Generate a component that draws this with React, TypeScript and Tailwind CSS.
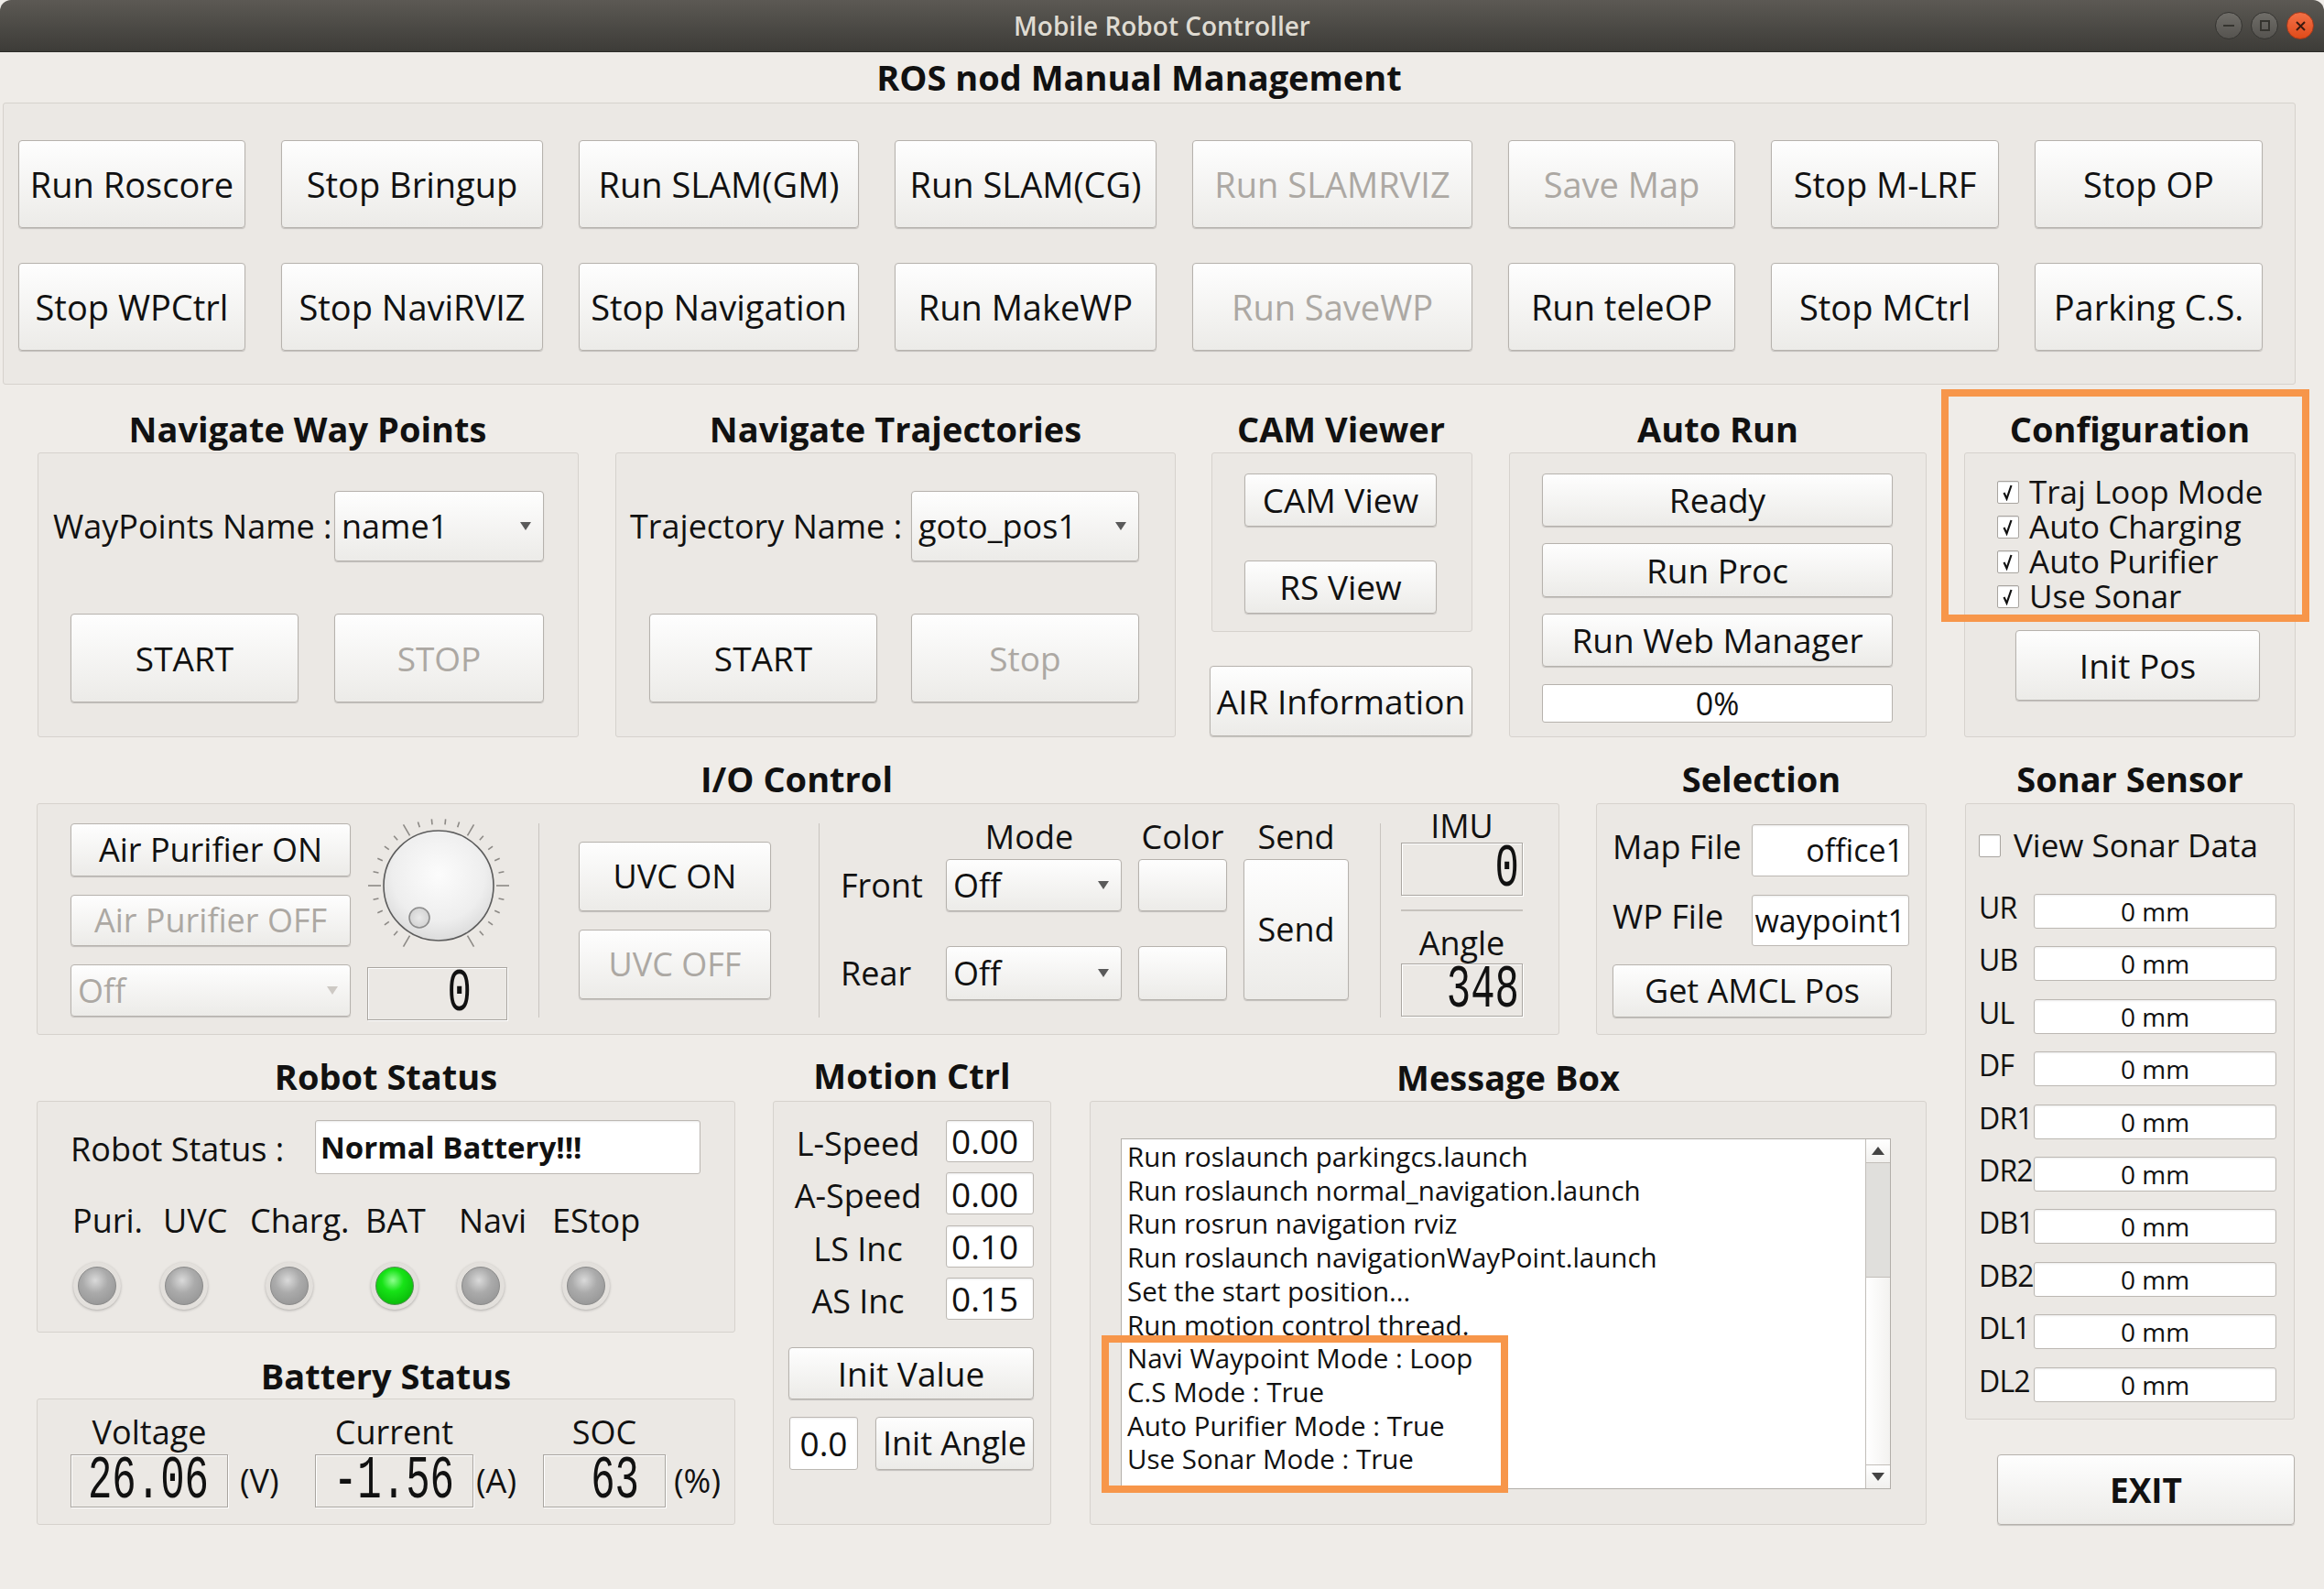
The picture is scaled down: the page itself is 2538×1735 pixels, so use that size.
import React from "react";

type P = { children?: React.ReactNode; className?: string; disabled?: boolean };

function Btn({ children, className = "", disabled = false }: P) {
  return (
    <div
      className={
        "flex items-center justify-center whitespace-nowrap rounded-[4px] border border-[#b6b2ad] bg-linear-to-b from-[#fefefe] to-[#ecebe8] shadow-[0_1px_1px_rgba(0,0,0,0.18)] " +
        (disabled ? "text-[#aca8a3] " : "text-[#111] ") +
        className
      }
    >
      {children}
    </div>
  );
}

function Combo({ text, className = "", disabled = false }: { text: string; className?: string; disabled?: boolean }) {
  return (
    <div
      className={
        "flex items-center justify-between whitespace-nowrap rounded-[4px] border border-[#b6b2ad] bg-linear-to-b from-[#fefefe] to-[#ecebe8] shadow-[0_1px_1px_rgba(0,0,0,0.18)] pl-[7px] pr-[13px] " +
        (disabled ? "text-[#aca8a3] " : "text-[#111] ") +
        className
      }
    >
      <span>{text}</span>
      <svg width="12" height="9" viewBox="0 0 12 9">
        <path d="M0 0H12L6 9Z" fill={disabled ? "#cdc9c4" : "#5a5a5a"} />
      </svg>
    </div>
  );
}

function Field({ children, className = "" }: P) {
  return (
    <div
      className={
        "flex items-center whitespace-nowrap bg-white border border-[#bcb8b3] rounded-[3px] shadow-[inset_0_1px_2px_rgba(0,0,0,0.08)] text-[#111] " +
        className
      }
    >
      {children}
    </div>
  );
}

function LCD({ value, className = "" }: { value: string; className?: string }) {
  return (
    <div
      className={
        "flex items-center justify-end border border-[#a9a5a0] shadow-[inset_1px_1px_0_#ffffff,1px_1px_0_#ffffff] font-['Liberation_Mono',monospace] text-[44px] leading-[30px] text-[#111] " +
        className
      }
    >
      <span className="inline-block h-[30px] leading-[30px] scale-y-[1.5] whitespace-pre">{value}</span>
    </div>
  );
}

function Group({ children, className = "" }: P) {
  return <div className={"border border-[#d6d2cd] rounded-[3px] bg-[#ebe8e4] " + className}>{children}</div>;
}

function Heading({ children, className = "" }: P) {
  return (
    <div className={"flex items-center justify-center whitespace-nowrap font-bold text-[38px] text-[#111] " + className}>
      {children}
    </div>
  );
}

function Check({ checked }: { checked: boolean }) {
  return (
    <div className="w-[24px] h-[25px] shrink-0 bg-white border border-[#a9a5a0] rounded-[2px] flex items-center justify-center shadow-[inset_0_1px_1px_rgba(0,0,0,0.1)]">
      {checked && (
        <svg width="14" height="19" viewBox="0 0 14 19">
          <path d="M2.5 10 L5.5 16.5 L10.5 2" fill="none" stroke="#111" strokeWidth="2.2" />
        </svg>
      )}
    </div>
  );
}

function Led({ on }: { on: boolean }) {
  return (
    <div className="w-[52px] h-[52px] shrink-0 rounded-full bg-[#e3e0dc] shadow-[0_1px_3px_rgba(0,0,0,0.25)] flex items-center justify-center">
      <div
        className={
          "w-[42px] h-[42px] rounded-full border " +
          (on
            ? "border-[#4f8f4f] bg-[radial-gradient(circle_at_45%_35%,#8dff8d_0%,#17e317_35%,#0bbf0b_75%,#3c8a3c_100%)]"
            : "border-[#8a8a8a] bg-[radial-gradient(circle_at_45%_35%,#dadada_0%,#ababab_40%,#9a9a9a_75%,#828282_100%)]")
        }
      />
    </div>
  );
}

function Dial() {
  const ticks: React.ReactNode[] = [];
  const cx = 78;
  const cy = 78;
  for (let i = 0; i <= 25; i++) {
    const deg = 240 - i * 12;
    const rad = (deg * Math.PI) / 180;
    const long = i % 5 === 0;
    const r1 = long ? 63 : 67;
    const r2 = long ? 77 : 73;
    ticks.push(
      <line
        key={i}
        x1={cx + r1 * Math.cos(rad)}
        y1={cy - r1 * Math.sin(rad)}
        x2={cx + r2 * Math.cos(rad)}
        y2={cy - r2 * Math.sin(rad)}
        stroke="#8c8985"
        strokeWidth={1.6}
      />
    );
  }
  return (
    <svg width="156" height="156" viewBox="0 0 156 156">
      <defs>
        <radialGradient id="dialg" cx="0.5" cy="0.4" r="0.65">
          <stop offset="0" stopColor="#fcfcfc" />
          <stop offset="0.65" stopColor="#eeeeee" />
          <stop offset="1" stopColor="#d6d6d6" />
        </radialGradient>
        <radialGradient id="dotg" cx="0.5" cy="0.5" r="0.6">
          <stop offset="0" stopColor="#e9e9e9" />
          <stop offset="1" stopColor="#cfcfcf" />
        </radialGradient>
      </defs>
      {ticks}
      <circle cx="78" cy="78" r="60" fill="url(#dialg)" stroke="#5c5c5c" strokeWidth="1.6" />
      <circle cx="57" cy="113" r="11" fill="url(#dotg)" stroke="#8c8c8c" strokeWidth="1.6" />
    </svg>
  );
}

function TitleBar() {
  return (
    <div className="h-[57px] rounded-t-[12px] bg-linear-to-b from-[#5c5954] to-[#3d3c38] grid grid-cols-[1fr_auto_1fr] items-center border-b border-[#2c2b28]">
      <div />
      <div className="text-[28px] font-semibold text-[#dfdbd2]">Mobile Robot Controller</div>
      <div className="flex justify-end gap-[9px] pr-[11px]">
        <div className="w-[30px] h-[30px] rounded-full border border-[#353431] bg-linear-to-b from-[#706e69] to-[#55534f] flex items-center justify-center">
          <div className="w-[12px] h-[2px] bg-[#35342f]" />
        </div>
        <div className="w-[30px] h-[30px] rounded-full border border-[#353431] bg-linear-to-b from-[#706e69] to-[#55534f] flex items-center justify-center">
          <div className="w-[11px] h-[12px] border-2 border-[#35342f]" />
        </div>
        <div className="w-[30px] h-[30px] rounded-full border border-[#a8391a] bg-linear-to-b from-[#f27045] to-[#df4a17] flex items-center justify-center">
          <svg width="11" height="11" viewBox="0 0 11 11">
            <path d="M1 1L10 10M10 1L1 10" stroke="#3a1a10" strokeWidth="2" />
          </svg>
        </div>
      </div>
    </div>
  );
}

const row1: [string, boolean][] = [
  ["Run Roscore", false],
  ["Stop Bringup", false],
  ["Run SLAM(GM)", false],
  ["Run SLAM(CG)", false],
  ["Run SLAMRVIZ", true],
  ["Save Map", true],
  ["Stop M-LRF", false],
  ["Stop OP", false],
];
const row2: [string, boolean][] = [
  ["Stop WPCtrl", false],
  ["Stop NaviRVIZ", false],
  ["Stop Navigation", false],
  ["Run MakeWP", false],
  ["Run SaveWP", true],
  ["Run teleOP", false],
  ["Stop MCtrl", false],
  ["Parking C.S.", false],
];

const messages = [
  "Run roslaunch parkingcs.launch",
  "Run roslaunch normal_navigation.launch",
  "Run rosrun navigation rviz",
  "Run roslaunch navigationWayPoint.launch",
  "Set the start position...",
  "Run motion control thread.",
  "Navi Waypoint Mode : Loop",
  "C.S Mode : True",
  "Auto Purifier Mode : True",
  "Use Sonar Mode : True",
];

const sonar = ["UR", "UB", "UL", "DF", "DR1", "DR2", "DB1", "DB2", "DL1", "DL2"];

export default function App() {
  return (
    <div className="relative w-[2538px] h-[1735px] overflow-hidden bg-[#efece8] font-['Open_Sans','Noto_Sans',sans-serif] text-[36px] text-[#111]">
      <TitleBar />
      <div className="pl-[3px]">
        {/* Header */}
        <div className="w-[2504px] h-[55px] flex items-center justify-center pr-[22px] font-bold text-[38px]">
          ROS nod Manual Management
        </div>
        {/* Top group */}
        <Group className="w-[2504px] h-[308px] pt-[40px] pl-[16px]">
          <div className="grid grid-cols-[248px_286px_306px_286px_306px_248px_249px_249px] grid-rows-[96px_96px] gap-x-[39px] gap-y-[38px] text-[38px]">
            {row1.map(([t, d]) => (
              <Btn key={t} disabled={d}>
                {t}
              </Btn>
            ))}
            {row2.map(([t, d]) => (
              <Btn key={t} disabled={d}>
                {t}
              </Btn>
            ))}
          </div>
        </Group>

        <div className="flex pl-[37px]">
          {/* LEFT AREA */}
          <div className="w-[2064px] flex flex-col">
            {/* Row A */}
            <div className="flex h-[385px]">
              <div className="w-[592px] flex flex-col">
                <Heading className="h-[74px] pt-[22px]">Navigate Way Points</Heading>
                <Group className="h-[311px] ml-[1px]">
                  <div className="flex items-center pl-[16px] pt-[41px]">
                    <span className="w-[307px] whitespace-nowrap">WayPoints Name :</span>
                    <Combo text="name1" className="w-[229px] h-[77px]" />
                  </div>
                  <div className="flex pl-[35px] pt-[57px] gap-[39px] text-[37px]">
                    <Btn className="w-[249px] h-[97px]">START</Btn>
                    <Btn disabled className="w-[229px] h-[97px]">
                      STOP
                    </Btn>
                  </div>
                </Group>
              </div>
              <div className="w-[612px] ml-[40px] flex flex-col">
                <Heading className="h-[74px] pt-[22px]">Navigate Trajectories</Heading>
                <Group className="h-[311px]">
                  <div className="flex items-center pl-[15px] pt-[41px]">
                    <span className="w-[307px] whitespace-nowrap">Trajectory Name :</span>
                    <Combo text="goto_pos1" className="w-[249px] h-[77px]" />
                  </div>
                  <div className="flex pl-[36px] pt-[57px] gap-[37px] text-[37px]">
                    <Btn className="w-[249px] h-[97px]">START</Btn>
                    <Btn disabled className="w-[249px] h-[97px]">
                      Stop
                    </Btn>
                  </div>
                </Group>
              </div>
              <div className="w-[287px] ml-[37px] flex flex-col">
                <Heading className="h-[74px] pt-[22px]">CAM Viewer</Heading>
                <Group className="ml-[2px] h-[196px] pt-[22px] pl-[35px] text-[37px]">
                  <Btn className="w-[210px] h-[58px]">CAM View</Btn>
                  <Btn className="w-[210px] h-[58px] mt-[37px]">RS View</Btn>
                </Group>
                <Btn className="mt-[37px] w-[287px] h-[77px] text-[37px]">AIR Information</Btn>
              </div>
              <div className="w-[456px] ml-[40px] flex flex-col">
                <Heading className="h-[74px] pt-[22px]">Auto Run</Heading>
                <Group className="h-[311px] pt-[22px] pl-[35px] flex flex-col text-[37px]">
                  <Btn className="w-[383px] h-[58px]">Ready</Btn>
                  <Btn className="w-[383px] h-[59px] mt-[18px]">Run Proc</Btn>
                  <Btn className="w-[383px] h-[58px] mt-[18px]">Run Web Manager</Btn>
                  <div className="w-[383px] h-[42px] mt-[19px] bg-white border border-[#b6b2ad] rounded-[3px] flex items-center justify-center text-[34px] leading-none">
                    0%
                  </div>
                </Group>
              </div>
            </div>

            {/* Row B */}
            <div className="flex h-[325px]">
              <div className="w-[1663px] flex flex-col">
                <Heading className="h-[72px] pt-[18px] w-[1663px] justify-start">
                  <span className="ml-[725px]">I/O Control</span>
                </Heading>
                <Group className="h-[253px] flex items-start">
                  {/* col 1 */}
                  <div className="ml-[36px] mt-[21px] flex flex-col w-[306px]">
                    <Btn className="w-[306px] h-[58px]">Air Purifier ON</Btn>
                    <Btn disabled className="w-[306px] h-[56px] mt-[20px]">
                      Air Purifier OFF
                    </Btn>
                    <Combo disabled text="Off" className="w-[306px] h-[57px] mt-[20px]" />
                  </div>
                  {/* dial */}
                  <div className="ml-[18px] flex flex-col w-[156px]">
                    <div className="mt-[11px]">
                      <Dial />
                    </div>
                    <LCD value="0" className="mt-[11px] w-[153px] h-[58px] pr-[38px]" />
                  </div>
                  <div className="ml-[31px] mt-[21px] w-[1px] h-[212px] bg-[#c8c4bf]" />
                  {/* UVC */}
                  <div className="ml-[43px] mt-[41px] flex flex-col w-[210px]">
                    <Btn className="w-[210px] h-[76px]">UVC ON</Btn>
                    <Btn disabled className="w-[210px] h-[76px] mt-[20px]">
                      UVC OFF
                    </Btn>
                  </div>
                  <div className="ml-[52px] mt-[21px] w-[1px] h-[212px] bg-[#c8c4bf]" />
                  {/* Mode area */}
                  <div className="ml-[23px] mt-[12px] flex">
                    <div className="w-[115px] flex flex-col">
                      <div className="h-[48px]" />
                      <div className="h-[57px] flex items-center">Front</div>
                      <div className="h-[59px] mt-[38px] flex items-center">Rear</div>
                    </div>
                    <div className="w-[192px] flex flex-col">
                      <div className="h-[48px] flex items-center justify-center pr-[10px]">Mode</div>
                      <Combo text="Off" className="w-[192px] h-[57px]" />
                      <Combo text="Off" className="w-[192px] h-[59px] mt-[38px]" />
                    </div>
                    <div className="w-[97px] ml-[18px] flex flex-col">
                      <div className="h-[48px] flex items-center justify-center">Color</div>
                      <Btn className="w-[97px] h-[57px]" />
                      <Btn className="w-[97px] h-[59px] mt-[38px]" />
                    </div>
                    <div className="w-[115px] ml-[18px] flex flex-col">
                      <div className="h-[48px] flex items-center justify-center">Send</div>
                      <Btn className="w-[115px] h-[154px]">Send</Btn>
                    </div>
                  </div>
                  <div className="ml-[34px] mt-[21px] w-[1px] h-[212px] bg-[#c8c4bf]" />
                  {/* IMU */}
                  <div className="ml-[22px] mt-[6px] w-[133px] flex flex-col">
                    <div className="h-[36px] flex items-center justify-center leading-none">IMU</div>
                    <LCD value="0" className="w-[133px] h-[58px] pr-[3px]" />
                    <div className="mt-[15px] h-[2px] bg-[#c6c2bd]" />
                    <div className="mt-[17px] h-[36px] flex items-center justify-center leading-none">Angle</div>
                    <LCD value="348" className="mt-[4px] w-[133px] h-[58px] pr-[3px]" />
                  </div>
                </Group>
              </div>
              <div className="w-[361px] ml-[40px] flex flex-col">
                <Heading className="h-[72px] pt-[18px]">Selection</Heading>
                <Group className="h-[253px] pl-[17px] pt-[22px] flex flex-col">
                  <div className="flex items-center">
                    <span className="w-[152px] -mt-[8px]">Map File</span>
                    <Field className="w-[172px] h-[57px] justify-end pr-[5px] text-[34px]">office1</Field>
                  </div>
                  <div className="flex items-center mt-[20px]">
                    <span className="w-[152px] -mt-[8px]">WP File</span>
                    <Field className="w-[172px] h-[56px] justify-end pr-[3px] text-[34px]">waypoint1</Field>
                  </div>
                  <Btn className="w-[305px] h-[58px] mt-[20px]">Get AMCL Pos</Btn>
                </Group>
              </div>
            </div>

            {/* Row C */}
            <div className="flex">
              <div className="w-[763px] flex flex-col">
                <Heading className="h-[72px] pt-[18px]">Robot Status</Heading>
                <Group className="h-[253px] flex flex-col">
                  <div className="flex items-center pl-[36px] mt-[20px]">
                    <span className="w-[267px] whitespace-nowrap mt-[4px]">Robot Status :</span>
                    <Field className="w-[421px] h-[59px] pl-[5px] font-bold text-[33px]">Normal Battery!!!</Field>
                  </div>
                  <div className="flex pl-[38px] mt-[33px] h-[36px] items-center">
                    <span className="w-[99px]">Puri.</span>
                    <span className="w-[95px]">UVC</span>
                    <span className="w-[126px]">Charg.</span>
                    <span className="w-[102px]">BAT</span>
                    <span className="w-[102px]">Navi</span>
                    <span>EStop</span>
                  </div>
                  <div className="flex pl-[39px] mt-[27px]">
                    <Led on={false} />
                    <div className="ml-[43px]">
                      <Led on={false} />
                    </div>
                    <div className="ml-[63px]">
                      <Led on={false} />
                    </div>
                    <div className="ml-[63px]">
                      <Led on={true} />
                    </div>
                    <div className="ml-[42px]">
                      <Led on={false} />
                    </div>
                    <div className="ml-[63px]">
                      <Led on={false} />
                    </div>
                  </div>
                </Group>
                <Heading className="h-[72px] pt-[22px]">Battery Status</Heading>
                <Group className="h-[138px] flex items-start pl-[36px] pt-[17px]">
                  <div className="w-[172px] flex flex-col items-center">
                    <div className="h-[37px] leading-[37px]">Voltage</div>
                    <LCD value="26.06" className="mt-[6px] w-[172px] h-[58px] pr-[20px]" />
                  </div>
                  <div className="ml-[13px] w-[52px] mt-[43px] h-[58px] flex items-center">(V)</div>
                  <div className="ml-[30px] w-[173px] flex flex-col items-center">
                    <div className="h-[37px] leading-[37px]">Current</div>
                    <LCD value="-1.56" className="mt-[6px] w-[173px] h-[58px] pr-[20px]" />
                  </div>
                  <div className="ml-[3px] w-[50px] mt-[43px] h-[58px] flex items-center">(A)</div>
                  <div className="ml-[23px] w-[134px] flex flex-col items-center">
                    <div className="h-[37px] leading-[37px]">SOC</div>
                    <LCD value="63" className="mt-[6px] w-[134px] h-[58px] pr-[28px]" />
                  </div>
                  <div className="ml-[9px] w-[58px] mt-[43px] h-[58px] flex items-center">(%)</div>
                </Group>
              </div>

              <div className="w-[304px] ml-[41px] flex flex-col">
                <Heading className="h-[72px] pt-[16px]">Motion Ctrl</Heading>
                <Group className="h-[463px] flex flex-col pt-[20px]">
                  {[
                    ["L-Speed", "0.00"],
                    ["A-Speed", "0.00"],
                    ["LS Inc", "0.10"],
                    ["AS Inc", "0.15"],
                  ].map(([l, v], i) => (
                    <div key={l} className={"flex items-center h-[46px] " + (i > 0 ? "mt-[11.3px]" : "")}>
                      <span className="w-[160px] ml-[12px] mt-[6px] text-center whitespace-nowrap">{l}</span>
                      <Field className="ml-[16px] w-[96px] h-[46px] pl-[5px] text-[37px]">{v}</Field>
                    </div>
                  ))}
                  <Btn className="ml-[16px] mt-[30px] w-[268px] h-[57px] text-[37px]">Init Value</Btn>
                  <div className="flex mt-[19px]">
                    <Field className="ml-[17px] w-[75px] h-[58px] justify-center text-[37px]">0.0</Field>
                    <Btn className="ml-[19px] w-[173px] h-[58px] text-[36px]">Init Angle</Btn>
                  </div>
                </Group>
              </div>

              <div className="w-[914px] ml-[42px] flex flex-col">
                <Heading className="h-[72px] pt-[20px]">Message Box</Heading>
                <Group className="h-[463px] pl-[33px] pt-[40px]">
                  <div className="w-[841px] h-[383px] bg-white border border-[#b3afaa] flex">
                    <div className="flex-1 pl-[6px] pt-[1px] text-[29.5px] leading-[36.7px] whitespace-nowrap">
                      {messages.map((m) => (
                        <div key={m}>{m}</div>
                      ))}
                    </div>
                    <div className="w-[27px] border-l border-[#c2beb9] flex flex-col">
                      <div className="h-[26px] bg-linear-to-b from-white to-[#f1f0ee] border-b border-[#c2beb9] flex items-center justify-center">
                        <svg width="14" height="9" viewBox="0 0 14 9">
                          <path d="M0 9H14L7 0Z" fill="#444" />
                        </svg>
                      </div>
                      <div className="h-[125px] bg-[#e0dfdc] border-b border-[#c2beb9]" />
                      <div className="flex-1 bg-linear-to-r from-white to-[#f3f2f0]" />
                      <div className="h-[26px] bg-linear-to-b from-white to-[#f1f0ee] border-t border-[#c2beb9] flex items-center justify-center">
                        <svg width="14" height="9" viewBox="0 0 14 9">
                          <path d="M0 0H14L7 9Z" fill="#444" />
                        </svg>
                      </div>
                    </div>
                  </div>
                </Group>
              </div>
            </div>
          </div>

          {/* RIGHT COLUMN */}
          <div className="w-[362px] ml-[41px] flex flex-col">
            <Heading className="h-[74px] pt-[22px]">Configuration</Heading>
            <Group className="h-[311px] pt-[23px] flex flex-col">
              {["Traj Loop Mode", "Auto Charging", "Auto Purifier", "Use Sonar"].map((t) => (
                <div key={t} className="h-[38px] flex items-center pl-[35px]">
                  <Check checked={true} />
                  <span className="ml-[11px] whitespace-nowrap text-[35px] leading-[38px]">{t}</span>
                </div>
              ))}
              <Btn className="ml-[55px] mt-[18px] w-[267px] h-[77px] text-[37px]">Init Pos</Btn>
            </Group>
            <Heading className="h-[72px] pt-[18px]">Sonar Sensor</Heading>
            <Group className="ml-[1px] w-[360px] h-[673px] pt-[26px] flex flex-col">
              <div className="h-[38px] flex items-center pl-[14px]">
                <Check checked={false} />
                <span className="ml-[14px] whitespace-nowrap text-[35px] leading-[38px]">View Sonar Data</span>
              </div>
              <div className="mt-[34px] flex flex-col gap-[19.4px]">
                {sonar.map((s) => (
                  <div key={s} className="flex items-center h-[38px] pl-[14px]">
                    <span className="w-[60px] text-[32px] leading-[38px] -mt-[8px] tracking-tight whitespace-nowrap">{s}</span>
                    <Field className="w-[265px] h-[38px] justify-center text-[28px] leading-none">0 mm</Field>
                  </div>
                ))}
              </div>
            </Group>
            <Btn className="ml-[36px] mt-[38px] w-[325px] h-[77px] font-bold text-[37px]">EXIT</Btn>
          </div>
        </div>
      </div>

      {/* Orange annotation overlays */}
      <div className="absolute left-[2120px] top-[425px] w-[402px] h-[254px] border-[8px] border-[#f7964a] pointer-events-none" />
      <div className="absolute left-[1203px] top-[1458px] w-[444px] h-[172px] border-[8px] border-[#f7964a] pointer-events-none" />
    </div>
  );
}
